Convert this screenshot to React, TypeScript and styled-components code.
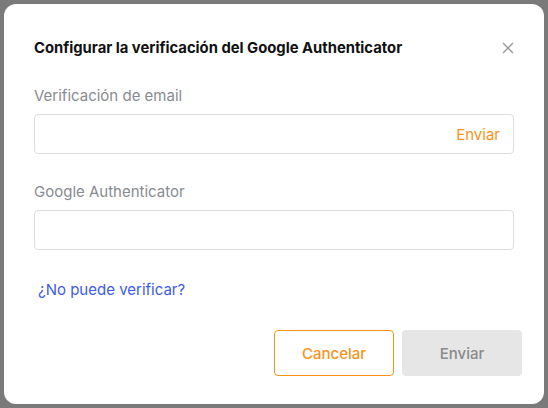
import React from 'react'
import styled, { createGlobalStyle } from 'styled-components'

const GlobalStyle = createGlobalStyle`
    html, body {
        margin: 0;
        padding: 0;
        background: #7a7a7a;
        font-family: Inter, "Noto Sans", sans-serif;
    }
`;

export default function App() {
    return (
        <>
            <GlobalStyle />
            <Overlay>
                <Modal>
                    <Header>
                        <h1>Configurar la verificación del Google Authenticator</h1>
                        <CloseButton aria-label="close">
                            <svg width="12" height="12" viewBox="0 0 12 12">
                                <path d="M1 1 L11 11 M11 1 L1 11" stroke="#9a9a9a" strokeWidth="1.4" fill="none" />
                            </svg>
                        </CloseButton>
                    </Header>

                    <Field>
                        <Label>Verificación de email</Label>
                        <InputBox>
                            <input />
                            <SendLink>Enviar</SendLink>
                        </InputBox>
                    </Field>

                    <Field>
                        <Label>Google Authenticator</Label>
                        <InputBox>
                            <input />
                        </InputBox>
                    </Field>

                    <HelpLink href="#">¿No puede verificar?</HelpLink>

                    <Footer>
                        <Button variant="outline">Cancelar</Button>
                        <Button variant="disabled">Enviar</Button>
                    </Footer>
                </Modal>
            </Overlay>
        </>
    )
}

const Overlay = styled.div`
    width: 548px;
    height: 408px;
    padding: 4px;
    box-sizing: border-box;
`;

const Modal = styled.div`
    width: 540px;
    height: 400px;
    background: #fff;
    border-radius: 12px;
    box-sizing: border-box;
    padding: 34px 22px 0 30px;
    display: flex;
    flex-direction: column;
`;

const Header = styled.header`
    display: flex;
    align-items: center;
    justify-content: space-between;
    margin-bottom: 28px;

    h1 {
        margin: 0;
        font-size: 14.8px;
        font-weight: 700;
        color: #111;
        line-height: 20px;
    }
`;

const CloseButton = styled.button`
    background: transparent;
    border: none;
    padding: 0;
    margin-right: 8px;
    display: flex;
    cursor: pointer;
`;

const Field = styled.div`
    display: flex;
    flex-direction: column;
    gap: 8px;
    width: 480px;
    margin-bottom: 28px;
`;

const Label = styled.label`
    font-size: 15px;
    line-height: 20px;
    color: #888b91;
`;

const InputBox = styled.div`
    height: 40px;
    box-sizing: border-box;
    border: 1px solid #dcdcdc;
    border-radius: 4px;
    display: flex;
    align-items: center;
    padding: 0 13px;

    input {
        flex: 1;
        border: none;
        outline: none;
        background: transparent;
        font-size: 14px;
    }
`;

const SendLink = styled.span`
    color: #f7931a;
    font-size: 15px;
    cursor: pointer;
`;

const HelpLink = styled.a`
    color: #3e5be8;
    font-size: 15px;
    text-decoration: none;
    margin: 2px 0 0 4px;
    line-height: 20px;
    align-self: flex-start;
`;

const Footer = styled.footer`
    display: flex;
    justify-content: flex-end;
    gap: 8px;
    margin-top: 30px;
`;

const Button = styled.button<{ variant: 'outline' | 'disabled' }>`
    width: 120px;
    height: 46px;
    border-radius: 4px;
    font-family: Inter, "Noto Sans", sans-serif;
    font-size: 15px;
    font-weight: 500;
    cursor: pointer;
    border: ${p => p.variant === 'outline' ? '1px solid #f7931a' : 'none'};
    background: ${p => p.variant === 'outline' ? '#fff' : '#e6e6e6'};
    color: ${p => p.variant === 'outline' ? '#f7931a' : '#8a8a8a'};
`;
